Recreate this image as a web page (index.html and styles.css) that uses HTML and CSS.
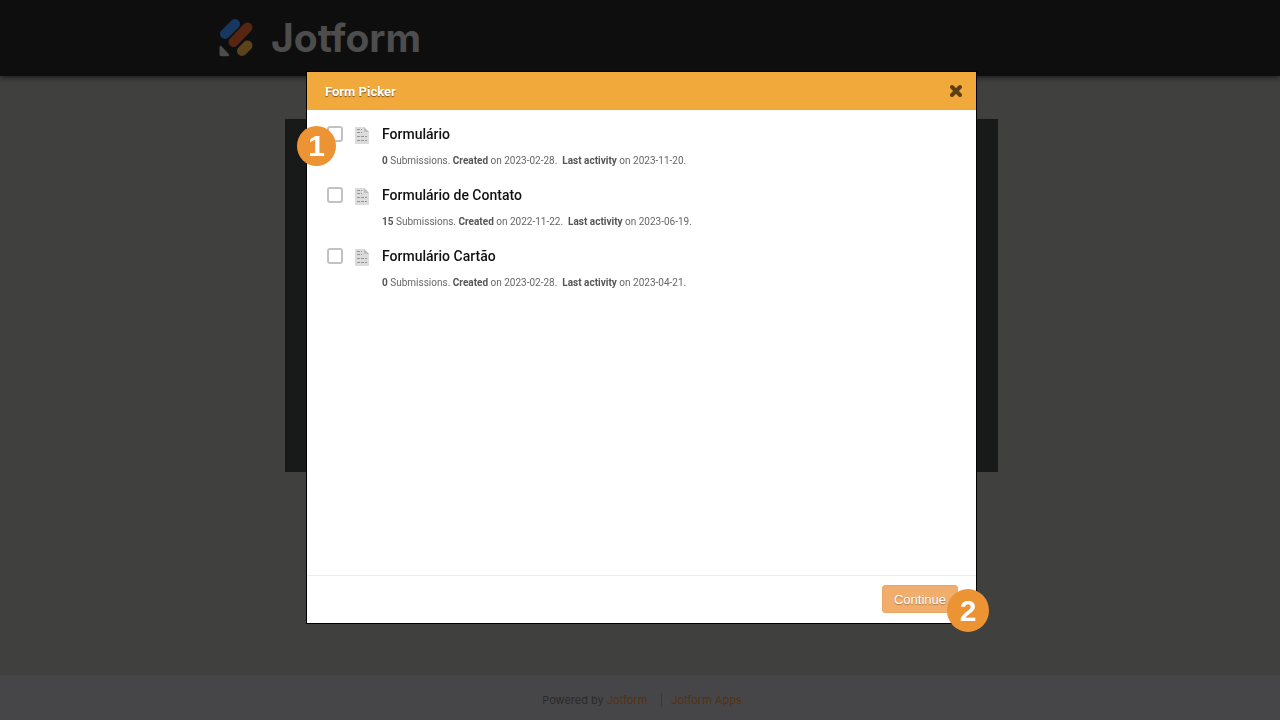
FILE: index.html
```html
<!DOCTYPE html>
<html lang="en">
<head>
    <meta charset="UTF-8">
    <meta name="viewport" content="width=device-width, initial-scale=1.0">
    <title>Form Picker</title>
    <link rel="stylesheet" href="styles.css">
</head>
<body>
    <header class="site-header">
        <div class="brand">
            <svg class="brand-icon" viewBox="0 0 35 38" width="35" height="38" aria-hidden="true">
                <g fill="none" stroke-linecap="round" stroke-width="10">
                    <path stroke="#17375f" d="M6 15L16 5"/>
                    <path stroke="#562613" d="M14.500 23L28.500 8.500"/>
                    <path stroke="#5b441b" d="M23 32L28.500 26.500"/>
                </g>
                <path fill="#4d4d4d" d="M0.500 28.500c0-1.300 1.200-1.900 2.200-1l7 7.500c1 1 .5 2.200-.8 2.200H2.500c-1.200 0-2-.8-2-2z"/>
            </svg>
            <span class="brand-name">Jotform</span>
        </div>
    </header>

    <main class="page">
        <div class="panel"></div>
    </main>

    <footer class="site-footer">
        <span>Powered by <a href="#">Jotform</a></span>
        <a class="apps-link" href="#">Jotform Apps</a>
    </footer>

    <!-- Form picker dialog -->
    <div class="backdrop">
        <section class="modal" role="dialog" aria-labelledby="modal-title">
            <div class="modal-header">
                <h1 id="modal-title">Form Picker</h1>
                <button class="close" type="button" aria-label="Close">
                    <svg viewBox="0 0 14 14" width="14" height="14" aria-hidden="true">
                        <path d="M3 3l8 8M11 3l-8 8" stroke="#5c3f12" stroke-width="4" stroke-linecap="round"/>
                    </svg>
                </button>
            </div>

            <ul class="form-list">
                <li class="form-item">
                    <input type="checkbox" id="form-1">
                    <svg class="doc" viewBox="0 0 14 17" width="14" height="17" aria-hidden="true">
                        <path fill="#dcdcdc" d="M0 0h9l5 5v12H0z"/><path fill="#bdbdbd" d="M9 0v5h5z"/>
                        <path stroke="#959595" stroke-dasharray="3 1" d="M2 2.500h5M2 5.500h5M2 9.500h10M2 13.500h10"/>
                    </svg>
                    <div class="form-text">
                        <label for="form-1">Formulário</label>
                        <p><b>0</b> Submissions. <b>Created</b> on 2023-02-28. &nbsp;<b>Last activity</b> on 2023-11-20.</p>
                    </div>
                    <span class="step step-one">1</span>
                </li>
                <li class="form-item">
                    <input type="checkbox" id="form-2">
                    <svg class="doc" viewBox="0 0 14 17" width="14" height="17" aria-hidden="true">
                        <path fill="#dcdcdc" d="M0 0h9l5 5v12H0z"/><path fill="#bdbdbd" d="M9 0v5h5z"/>
                        <path stroke="#959595" stroke-dasharray="3 1" d="M2 2.500h5M2 5.500h5M2 9.500h10M2 13.500h10"/>
                    </svg>
                    <div class="form-text">
                        <label for="form-2">Formulário de Contato</label>
                        <p><b>15</b> Submissions. <b>Created</b> on 2022-11-22. &nbsp;<b>Last activity</b> on 2023-06-19.</p>
                    </div>
                </li>
                <li class="form-item">
                    <input type="checkbox" id="form-3">
                    <svg class="doc" viewBox="0 0 14 17" width="14" height="17" aria-hidden="true">
                        <path fill="#dcdcdc" d="M0 0h9l5 5v12H0z"/><path fill="#bdbdbd" d="M9 0v5h5z"/>
                        <path stroke="#959595" stroke-dasharray="3 1" d="M2 2.500h5M2 5.500h5M2 9.500h10M2 13.500h10"/>
                    </svg>
                    <div class="form-text">
                        <label for="form-3">Formulário Cartão</label>
                        <p><b>0</b> Submissions. <b>Created</b> on 2023-02-28. &nbsp;<b>Last activity</b> on 2023-04-21.</p>
                    </div>
                </li>
            </ul>

            <div class="modal-footer">
                <button class="continue" type="button">Continue</button>
                <span class="step step-two">2</span>
            </div>
        </section>
    </div>
</body>
</html>
```

FILE: styles.css
```css
* {
    box-sizing: border-box;
}
body {
    margin: 0;
    min-height: 100vh;
    display: flex;
    flex-direction: column;
    background-color: #40403e;
    font-family: Roboto, sans-serif;
}

/* Dimmed page behind the dialog */
.site-header {
    background-color: #0e0e0e;
    padding: 18px 24px;
    box-shadow: 0 1px 6px rgba(0, 0, 0, 0.7);
}
.brand {
    max-width: 842px;
    height: 40px;
    margin: 0 auto;
    display: flex;
    align-items: center;
    gap: 17px;
}
.brand-name {
    font-family: Inter, sans-serif;
    font-size: 39px;
    line-height: 40px;
    font-weight: 700;
    color: #4d4d4d;
}
.page {
    flex: 1;
    display: flex;
    flex-direction: column;
    padding: 43px 24px 203px 27px;
}
.panel {
    flex: 1;
    width: 100%;
    max-width: 713px;
    margin: 0 auto;
    background-color: #181a19;
}
.site-footer {
    min-height: 45px;
    padding: 4px 0 0 4px;
    display: flex;
    justify-content: center;
    align-items: center;
    gap: 14px;
    background-color: #464648;
    color: #2a2a2b;
    font-family: Inter, sans-serif;
    font-size: 11px;
}
.site-footer a {
    color: #57300f;
    text-decoration: none;
}
.apps-link {
    padding-left: 9px;
    border-left: 1px solid #57300f;
}

/* Dialog */
.backdrop {
    position: fixed;
    inset: 0;
    display: flex;
    justify-content: center;
    padding: 72px 24px 97px 27px;
}
.modal {
    width: 100%;
    max-width: 669px;
    display: flex;
    flex-direction: column;
    background-color: #fff;
    box-shadow: 0 0 0 1px #000;
}
.modal-header {
    display: flex;
    justify-content: space-between;
    align-items: center;
    height: 38px;
    padding: 0 13px 0 18px;
    background-color: #f2a93c;
}
.modal-header h1 {
    margin: 0;
    font-size: 13px;
    color: #fff;
    text-shadow: 0 1px 1px rgba(0, 0, 0, 0.5);
}
.close {
    display: flex;
    padding: 0;
    border: none;
    background: none;
    cursor: pointer;
}
.form-list {
    flex: 1;
    margin: 0;
    padding: 14px 20px;
    list-style: none;
}
.form-item {
    position: relative;
    display: flex;
    align-items: flex-start;
    height: 61px;
}
.form-item input {
    appearance: none;
    width: 16px;
    height: 16px;
    margin: 2px 12px 0 0;
    border: 2px solid #c2c2c2;
    border-radius: 3px;
    background-color: #fff;
}
.form-item input:checked {
    background-color: #f2a93c;
}
.doc {
    margin: 3px 13px 0 0;
}
.form-text label {
    display: block;
    font-size: 14px;
    line-height: 20px;
    font-weight: 500;
    color: #111;
}
.form-text p {
    margin: 9px 0 0;
    font-size: 10px;
    line-height: 16px;
    color: #666;
}
.form-text b {
    color: #555;
}
.modal-footer {
    position: relative;
    display: flex;
    justify-content: flex-end;
    align-items: flex-start;
    height: 48px;
    padding: 9px 18px;
    border-top: 1px solid #eee;
}
.continue {
    height: 28px;
    padding: 0 11px;
    border: 1px solid #eda763;
    border-radius: 3px;
    background-color: #f0ad6b;
    color: #fff;
    font-family: "Liberation Sans", sans-serif;
    font-size: 13px;
    text-shadow: 0 1px 1px rgba(0, 0, 0, 0.3);
    cursor: pointer;
}

/* Numbered step markers */
.step {
    position: absolute;
    display: flex;
    justify-content: center;
    align-items: center;
    border-radius: 50%;
    background-color: #ec9333;
    color: #fff;
    font-family: "Liberation Sans", sans-serif;
    font-size: 30px;
    font-weight: 700;
}
.step-one {
    top: 2px;
    left: -30px;
    width: 39px;
    height: 40px;
}
.step-two {
    top: 13px;
    right: -13px;
    width: 42px;
    height: 43px;
}
```
